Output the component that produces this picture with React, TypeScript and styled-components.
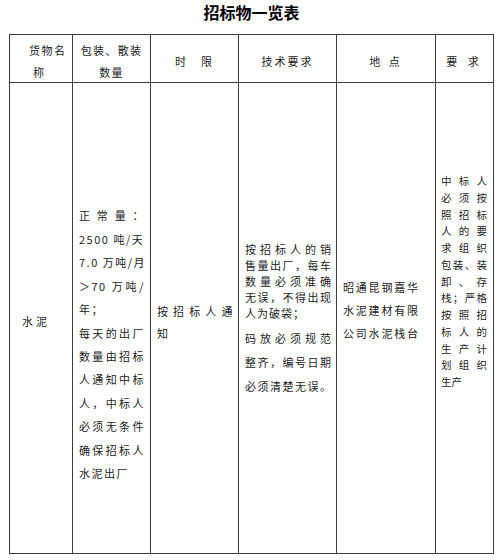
import {type FC} from "react";
import styled, {createGlobalStyle} from "styled-components";

type LineSpec = {
    text: string;
    justify?: boolean;
    indent?: number;
};

type Para = {
    lines: LineSpec[];
    lineHeight: number;
};

type CellSpec = {
    width: number;
    padLeft: number;
    padRight: number;
    shift: number; // + moves the block down, - moves it up
    fontSize: number;
    spacing: number;
    paras: Para[];
    gap?: number;
};

const j = (text: string): LineSpec => ({text, justify: true});
const n = (text: string): LineSpec => ({text});

const widths = [63, 78, 88, 98, 99, 58];

const headers: CellSpec[] = [
    {
        width: widths[0], padLeft: 0, padRight: 0, shift: 2, fontSize: 11, spacing: 1.5,
        paras: [{lineHeight: 22, lines: [{text: "货物名", indent: 19}, {text: "称", indent: 23}]}]
    },
    {
        width: widths[1], padLeft: 0, padRight: 0, shift: 2.5, fontSize: 11, spacing: 1.3,
        paras: [{lineHeight: 22, lines: [n("包装、散装"), n("数量")]}]
    },
    {
        width: widths[2], padLeft: 0, padRight: 0, shift: 2.5, fontSize: 11, spacing: 2,
        paras: [{lineHeight: 22, lines: [n("时　限")]}]
    },
    {
        width: widths[3], padLeft: 0, padRight: 0, shift: 2.5, fontSize: 11, spacing: 2,
        paras: [{lineHeight: 22, lines: [n("技术要求")]}]
    },
    {
        width: widths[4], padLeft: 0, padRight: 0, shift: 2.5, fontSize: 11, spacing: 3,
        paras: [{lineHeight: 22, lines: [n("地 点")]}]
    },
    {
        width: widths[5], padLeft: 0, padRight: 0, shift: 2.5, fontSize: 11, spacing: 4,
        paras: [{lineHeight: 22, lines: [n("要 求")]}]
    },
];

const body: CellSpec[] = [
    {
        width: widths[0], padLeft: 12, padRight: 0, shift: 3, fontSize: 11, spacing: 3,
        paras: [{lineHeight: 20, lines: [n("水泥")]}]
    },
    {
        width: widths[1], padLeft: 6, padRight: 5, shift: 27, fontSize: 11, spacing: 1.5,
        paras: [{
            lineHeight: 23.45, lines: [
                j("正常量："),
                n("2500 吨/天"),
                j("7.0 万吨/月"),
                j("＞70 万吨/"),
                n("年；"),
                j("每天的出厂"),
                j("数量由招标"),
                j("人通知中标"),
                j("人，中标人"),
                j("必须无条件"),
                j("确保招标人"),
                n("水泥出厂"),
            ]
        }]
    },
    {
        width: widths[2], padLeft: 6, padRight: 4, shift: 4, fontSize: 11, spacing: 1.5,
        paras: [{lineHeight: 22, lines: [j("按招标人通"), n("知")]}]
    },
    {
        width: widths[3], padLeft: 6, padRight: 4, shift: 1, fontSize: 11, spacing: 1,
        gap: 5,
        paras: [
            {
                lineHeight: 16, lines: [
                    j("按招标人的销"),
                    j("售量出厂，每车"),
                    j("数量必须准确"),
                    j("无误，不得出现"),
                    n("人为破袋；"),
                ]
            },
            {
                lineHeight: 24, lines: [
                    j("码放必须规范"),
                    j("整齐，编号日期"),
                    j("必须清楚无误。"),
                ]
            },
        ]
    },
    {
        width: widths[4], padLeft: 6, padRight: 0, shift: -8, fontSize: 11, spacing: 1.8,
        paras: [{lineHeight: 23, lines: [n("昭通昆钢嘉华"), n("水泥建材有限"), n("公司水泥栈台")]}]
    },
    {
        width: widths[5], padLeft: 5, padRight: 6, shift: -36, fontSize: 10.5, spacing: 0,
        paras: [{
            lineHeight: 16.75, lines: [
                j("中标人"),
                j("必须按"),
                j("照招标"),
                j("人的要"),
                j("求组织"),
                j("包装、装"),
                j("卸、存"),
                j("栈；严格"),
                j("按照招"),
                j("标人的"),
                j("生产计"),
                j("划组织"),
                n("生产"),
            ]
        }]
    },
];

const renderCell = (c: CellSpec, header: boolean, key: number) => {
    const Wrap = header ? HeadCell : BodyCell;
    return (
        <Wrap key={key}
              $padLeft={c.padLeft}
              $padRight={c.padRight}
              $shift={c.shift}
              $size={c.fontSize}
              $spacing={c.spacing}
              $center={header}>
            <Block $gap={c.gap ?? 0}>
                {c.paras.map((p, pi) => (
                    <Paragraph key={pi} $lineHeight={p.lineHeight}>
                        {p.lines.map((l, li) => (
                            <Line key={li} $justify={!!l.justify} $indent={l.indent ?? 0}>
                                {l.text}
                            </Line>
                        ))}
                    </Paragraph>
                ))}
            </Block>
        </Wrap>
    );
};

const App: FC = () => {
    return (
        <>
            <GlobalStyle/>
            <Page>
                <Title>招标物一览表</Title>
                <Table $cols={widths}>
                    {headers.map((h, i) => renderCell(h, true, i))}
                    {body.map((b, i) => renderCell(b, false, i + 10))}
                </Table>
            </Page>
        </>
    );
};

export default App;

const GlobalStyle = createGlobalStyle`
    html, body {
        margin: 0;
        padding: 0;
        background: #ffffff;
    }

    body {
        font-family: "Noto Sans CJK SC", "Noto Sans", sans-serif;
        color: #1c1c1c;
    }
`;

const Page = styled.div`
    width: 500px;
    height: 560px;

    padding-left: 9px;

    box-sizing: border-box;
`;

const Title = styled.div`
    width: 485px;
    height: 34px;

    padding-bottom: 10px;

    display: flex;
    align-items: center;
    justify-content: center;

    box-sizing: border-box;

    font-size: 16px;
    font-weight: 700;
    line-height: 20px;

    color: #000000;
`;

const Table = styled.div<{ $cols: number[] }>`
    display: grid;
    grid-template-columns: ${p => p.$cols.map(w => `${w}px`).join(" ")};
    grid-template-rows: 48px 471px;

    width: fit-content;

    border-top: 1px solid #3c3c3c;
    border-left: 1px solid #3c3c3c;
`;

type CellProps = {
    $padLeft: number;
    $padRight: number;
    $shift: number;
    $size: number;
    $spacing: number;
    $center: boolean;
};

const Cell = styled.div<CellProps>`
    display: flex;
    flex-direction: column;
    justify-content: center;
    align-items: ${p => p.$center ? "center" : "stretch"};

    padding-left: ${p => p.$padLeft}px;
    padding-right: ${p => p.$padRight}px;
    padding-top: ${p => Math.max(0, p.$shift * 2)}px;
    padding-bottom: ${p => Math.max(0, -p.$shift * 2)}px;

    box-sizing: border-box;
    min-width: 0;

    border-right: 1px solid #3c3c3c;
    border-bottom: 1px solid #3c3c3c;

    font-size: ${p => p.$size}px;
    letter-spacing: ${p => p.$spacing}px;
`;

const HeadCell = styled(Cell)`
    text-align: center;
`;

const BodyCell = styled(Cell)`
    text-align: left;
`;

const Block = styled.div<{ $gap: number }>`
    display: flex;
    flex-direction: column;
    gap: ${p => p.$gap}px;

    width: 100%;
`;

const Paragraph = styled.div<{ $lineHeight: number }>`
    line-height: ${p => p.$lineHeight}px;
`;

const Line = styled.div<{ $justify: boolean; $indent: number }>`
    white-space: nowrap;

    padding-left: ${p => p.$indent}px;

    text-align: ${p => p.$justify ? "justify" : p.$indent > 0 ? "left" : "inherit"};
    text-align-last: ${p => p.$justify ? "justify" : "auto"};
    text-justify: inter-character;
`;
